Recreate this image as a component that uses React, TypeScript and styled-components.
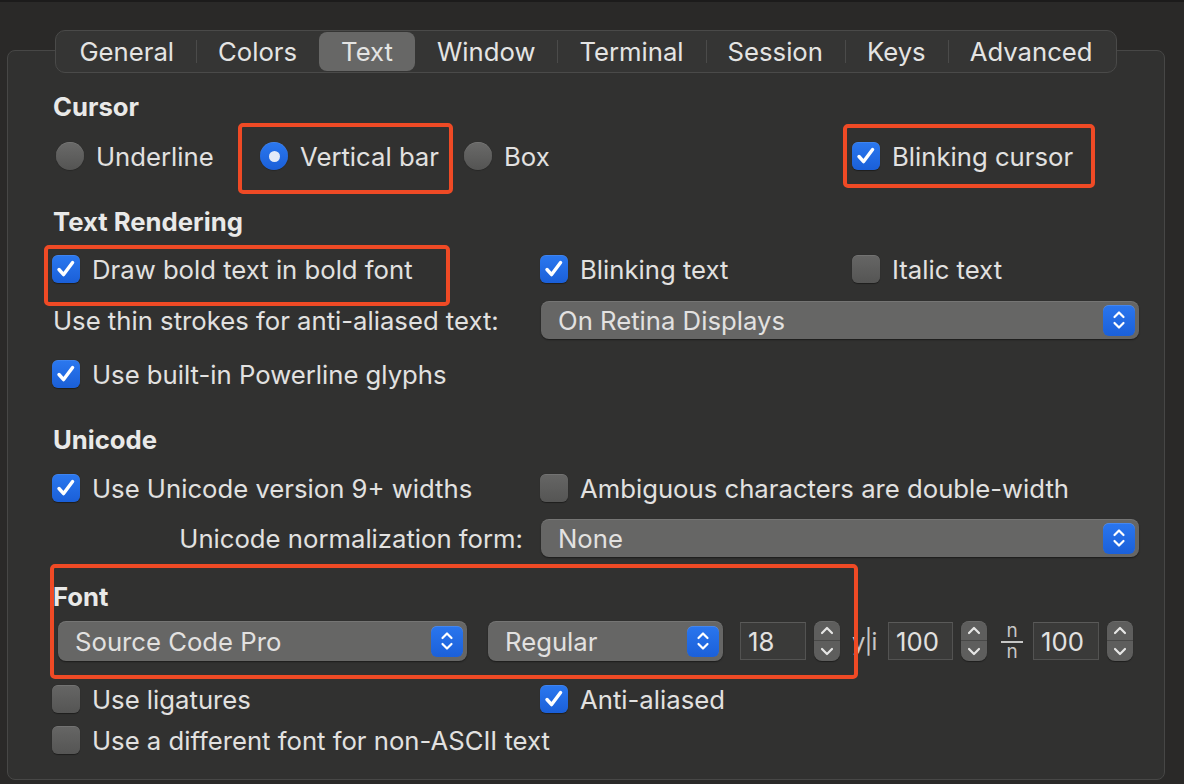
import React from "react";
import styled, { createGlobalStyle } from "styled-components";

const GlobalStyle = createGlobalStyle`
  html, body { margin: 0; padding: 0; background: #2a2928; }
  body {
    font-family: Inter, "Liberation Sans", sans-serif;
    -webkit-font-smoothing: antialiased;
  }
`;

const TEXT = "#e2e1e0";
const RED = "#ef4a25";

const Page = styled.div`
  position: relative;
  width: 1184px;
  height: 784px;
  overflow: hidden;
  box-sizing: border-box;
  background: #2a2928;
  border-top: 2px solid #1c1b1b;
  padding-top: 28px;
  font-size: 25.7px;
  color: ${TEXT};
`;

const Frame = styled.div`
  margin-left: 7px;
  width: 1158px;
`;

const TabBar = styled.div`
  position: relative;
  z-index: 1;
  display: flex;
  width: fit-content;
  height: 43px;
  margin: 0 auto;
  box-sizing: border-box;
  padding: 1px;
  border: 1px solid #4a4a49;
  border-radius: 10px;
  background: #353534;
`;

const Tab = styled.div<{ $active?: boolean; $sep?: boolean }>`
  position: relative;
  display: flex;
  align-items: center;
  padding: 0 22px;
  border-radius: 8px;
  background: ${(p) => (p.$active ? "#676766" : "transparent")};
  color: #e4e4e3;
  &::before {
    content: "";
    display: ${(p) => (p.$sep ? "block" : "none")};
    position: absolute;
    left: 0;
    top: 8px;
    bottom: 8px;
    width: 1px;
    background: #4b4b4a;
  }
`;

const Panel = styled.div`
  margin-top: -23px;
  height: 730px;
  box-sizing: border-box;
  border: 1px solid #474746;
  border-radius: 8px;
  background: #313130;
  padding: 39px 0 0 45px;
  display: flex;
  flex-direction: column;
`;

const Header = styled.div<{ $mt?: number }>`
  height: 32px;
  display: flex;
  align-items: center;
  font-weight: 700;
  color: #e9e9e8;
  margin-top: ${(p) => p.$mt ?? 0}px;
`;

const Row = styled.div<{ $mt?: number; $h?: number }>`
  display: grid;
  grid-template-columns: 488px 312px 1fr;
  align-items: center;
  height: ${(p) => p.$h ?? 40}px;
  margin-top: ${(p) => p.$mt ?? 0}px;
`;

const RadioRow = styled(Row)`
  grid-template-columns: 204px 204px 389px auto;
  padding-left: 3px;
`;

const Item = styled.label`
  display: inline-flex;
  align-items: center;
  gap: 12px;
  width: max-content;
  white-space: nowrap;
`;

const Box = styled.span<{ $on?: boolean }>`
  flex-shrink: 0;
  display: inline-flex;
  align-items: center;
  justify-content: center;
  width: 28px;
  height: 28px;
  margin-left: -1px;
  border-radius: 6px;
  box-sizing: border-box;
  background: ${(p) =>
    p.$on
      ? "linear-gradient(180deg, #2b78ef 0%, #1a5fd8 100%)"
      : "linear-gradient(180deg, #666665 0%, #555554 100%)"};
  box-shadow: inset 0 0.5px 0 rgba(255, 255, 255, 0.18), 0 0.5px 1px rgba(0, 0, 0, 0.4);
`;

const Circle = styled.span<{ $on?: boolean }>`
  flex-shrink: 0;
  display: inline-flex;
  align-items: center;
  justify-content: center;
  width: 28px;
  height: 28px;
  border-radius: 50%;
  background: ${(p) =>
    p.$on
      ? "linear-gradient(180deg, #2b78ef 0%, #1a5fd8 100%)"
      : "linear-gradient(180deg, #6a6a69 0%, #545453 100%)"};
  box-shadow: inset 0 0.5px 0 rgba(255, 255, 255, 0.18), 0 0.5px 1px rgba(0, 0, 0, 0.4);
`;

const Dot = styled.span`
  width: 11px;
  height: 11px;
  border-radius: 50%;
  background: #e3ebf8;
`;

const RightLabel = styled.div`
  text-align: right;
  padding-right: 18px;
  white-space: nowrap;
`;

const Popup = styled.div<{ $w: number; $h: number; $ml?: number }>`
  grid-column: 2 / 4;
  display: flex;
  align-items: center;
  justify-content: space-between;
  width: ${(p) => p.$w}px;
  height: ${(p) => p.$h}px;
  margin-left: ${(p) => p.$ml ?? 0}px;
  box-sizing: border-box;
  padding: 0 4px 0 17px;
  border-radius: 8px;
  background: #666665;
  box-shadow: inset 0 1px 0 rgba(255, 255, 255, 0.1), 0 1px 1.5px rgba(0, 0, 0, 0.45);
  white-space: nowrap;
  flex-shrink: 0;
`;

const BlueButton = styled.span`
  display: inline-flex;
  align-items: center;
  justify-content: center;
  width: 32px;
  height: 31px;
  border-radius: 6px;
  background: linear-gradient(180deg, #2a76ee 0%, #1b60d9 100%);
  box-shadow: inset 0 0.5px 0 rgba(255, 255, 255, 0.25);
`;

const FontRow = styled.div<{ $mt?: number }>`
  display: flex;
  align-items: center;
  height: 40px;
  padding-left: 5px;
  margin-top: ${(p) => p.$mt ?? 0}px;
`;

const NumberGroup = styled.div<{ $ml: number }>`
  display: flex;
  align-items: center;
  gap: 8px;
  margin-left: ${(p) => p.$ml}px;
`;

const Field = styled.div<{ $w: number }>`
  width: ${(p) => p.$w}px;
  height: 38px;
  box-sizing: border-box;
  display: flex;
  align-items: center;
  padding-left: 7px;
  background: #3a3a39;
  border: 1px solid #535352;
  border-top-color: #5a5a59;
`;

const Stepper = styled.div`
  width: 26px;
  height: 40px;
  border-radius: 8px;
  display: grid;
  grid-template-rows: 1fr 1fr;
  background: #5e5e5d;
  box-shadow: inset 0 0.5px 0 rgba(255, 255, 255, 0.15), 0 1px 1px rgba(0, 0, 0, 0.4);
  overflow: hidden;
`;

const StepHalf = styled.span<{ $top?: boolean }>`
  display: flex;
  align-items: center;
  justify-content: center;
  border-bottom: ${(p) => (p.$top ? "1px solid #484847" : "none")};
`;

const SpacingIcon = styled.div<{ $ml: number }>`
  width: 25px;
  margin-left: ${(p) => p.$ml}px;
  color: #c6c6c5;
  font-size: 24px;
  white-space: nowrap;
  letter-spacing: -1px;
`;

const Fraction = styled.div<{ $ml: number }>`
  margin-left: ${(p) => p.$ml}px;
  width: 22px;
  display: flex;
  flex-direction: column;
  align-items: center;
  color: #c6c6c5;
  font-size: 19px;
  line-height: 16px;
`;

const FracLine = styled.span`
  width: 22px;
  height: 2px;
  margin: 2px 0 1px;
  background: #c6c6c5;
`;

const Mark = styled.div`
  position: absolute;
  box-sizing: border-box;
  border: 4px solid ${RED};
  border-radius: 5px;
  pointer-events: none;
  z-index: 2;
`;

const Check = () => (
  <svg width="22" height="22" viewBox="0 0 22 22">
    <path
      d="M4 11.5 L8.6 16.6 L17.6 4.6"
      fill="none"
      stroke="#ffffff"
      strokeWidth="3.4"
      strokeLinecap="round"
      strokeLinejoin="round"
    />
  </svg>
);

const Chevrons = () => (
  <svg width="16" height="24" viewBox="0 0 16 24">
    <path
      d="M3.5 9 L8 4.5 L12.5 9 M3.5 15 L8 19.5 L12.5 15"
      fill="none"
      stroke="#ffffff"
      strokeWidth="2.2"
      strokeLinecap="round"
      strokeLinejoin="round"
    />
  </svg>
);

const Chev = ({ up }: { up?: boolean }) => (
  <svg width="14" height="9" viewBox="0 0 14 9">
    <path
      d={up ? "M2 7 L7 2 L12 7" : "M2 2 L7 7 L12 2"}
      fill="none"
      stroke="#e6e6e5"
      strokeWidth="2.2"
      strokeLinecap="round"
      strokeLinejoin="round"
    />
  </svg>
);

const CheckBox = ({ on, label }: { on?: boolean; label: string }) => (
  <Item>
    <Box $on={on}>{on && <Check />}</Box>
    {label}
  </Item>
);

const Radio = ({ on, label }: { on?: boolean; label: string }) => (
  <Item>
    <Circle $on={on}>{on && <Dot />}</Circle>
    {label}
  </Item>
);

const Select = ({ w, h, ml, children }: { w: number; h: number; ml?: number; children: string }) => (
  <Popup $w={w} $h={h} $ml={ml}>
    <span>{children}</span>
    <BlueButton>
      <Chevrons />
    </BlueButton>
  </Popup>
);

const NumberControl = ({ value, w, ml }: { value: string; w: number; ml: number }) => (
  <NumberGroup $ml={ml}>
    <Field $w={w}>{value}</Field>
    <Stepper>
      <StepHalf $top>
        <Chev up />
      </StepHalf>
      <StepHalf>
        <Chev />
      </StepHalf>
    </Stepper>
  </NumberGroup>
);

const tabs = ["General", "Colors", "Text", "Window", "Terminal", "Session", "Keys", "Advanced"];
const activeTab = 2;

const marks = [
  { left: 238, top: 121, width: 215, height: 71 },
  { left: 843, top: 122, width: 252, height: 64 },
  { left: 44, top: 243, width: 406, height: 61 },
  { left: 50, top: 562, width: 808, height: 115 },
];

export default function App() {
  return (
    <>
      <GlobalStyle />
      <Page>
        <Frame>
          <TabBar>
            {tabs.map((t, i) => (
              <Tab
                key={t}
                $active={i === activeTab}
                $sep={i > 0 && i !== activeTab && i - 1 !== activeTab}
              >
                {t}
              </Tab>
            ))}
          </TabBar>
          <Panel>
            <Header>Cursor</Header>
            <RadioRow $mt={14}>
              <Radio label="Underline" />
              <Radio on label="Vertical bar" />
              <Radio label="Box" />
              <CheckBox on label="Blinking cursor" />
            </RadioRow>

            <Header $mt={29}>Text Rendering</Header>
            <Row $mt={12}>
              <CheckBox on label="Draw bold text in bold font" />
              <CheckBox on label="Blinking text" />
              <CheckBox label="Italic text" />
            </Row>
            <Row $mt={11}>
              <div>Use thin strokes for anti-aliased text:</div>
              <Select w={598} h={38}>On Retina Displays</Select>
            </Row>
            <Row $mt={14}>
              <CheckBox on label="Use built-in Powerline glyphs" />
            </Row>

            <Header $mt={29}>Unicode</Header>
            <Row $mt={13}>
              <CheckBox on label="Use Unicode version 9+ widths" />
              <CheckBox label="Ambiguous characters are double-width" />
            </Row>
            <Row $mt={10}>
              <RightLabel>Unicode normalization form:</RightLabel>
              <Select w={598} h={38}>None</Select>
            </Row>

            <Header $mt={22}>Font</Header>
            <FontRow $mt={9}>
              <Select w={409} h={40}>Source Code Pro</Select>
              <Select w={235} h={40} ml={21}>Regular</Select>
              <NumberControl value="18" w={66} ml={17} />
              <SpacingIcon $ml={12}>y|i</SpacingIcon>
              <NumberControl value="100" w={65} ml={11} />
              <Fraction $ml={14}>
                <span>n</span>
                <FracLine />
                <span>n</span>
              </Fraction>
              <NumberControl value="100" w={66} ml={10} />
            </FontRow>
            <Row $mt={18}>
              <CheckBox label="Use ligatures" />
              <CheckBox on label="Anti-aliased" />
            </Row>
            <Row $mt={1}>
              <CheckBox label="Use a different font for non-ASCII text" />
            </Row>
          </Panel>
        </Frame>
        {marks.map((m, i) => (
          <Mark key={i} style={{ left: m.left, top: m.top, width: m.width, height: m.height }} />
        ))}
      </Page>
    </>
  );
}
